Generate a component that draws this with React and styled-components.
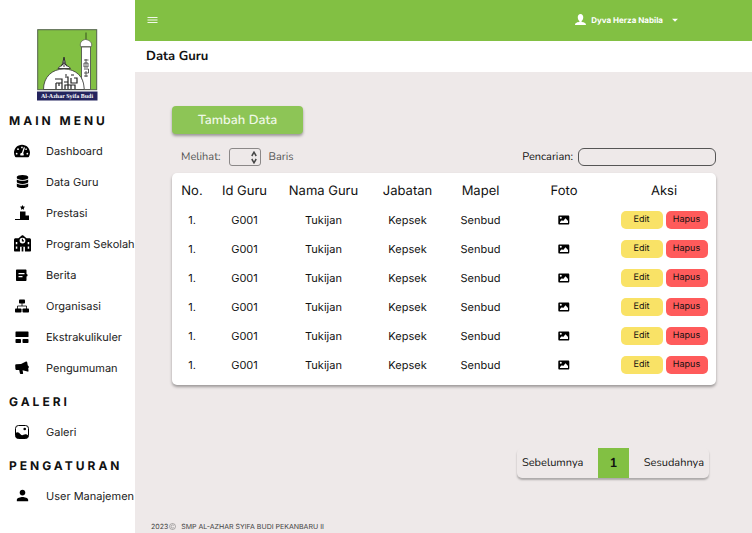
import React from "react";
import styled, { createGlobalStyle } from "styled-components";
import { FaTachometerAlt, FaDatabase } from "react-icons/fa";
import { MdPerson, MdArrowDropDown } from "react-icons/md";

const sans = `Inter, "Liberation Sans", sans-serif`;
const rounded = `Nunito, "Noto Sans", sans-serif`;
const green = "#82c043";

const GlobalStyle = createGlobalStyle`
  *, *::before, *::after { box-sizing: border-box; }
  body { margin: 0; background: #eee9e9; color: #111; font-family: ${sans}; text-rendering: geometricPrecision; }
  button, input, select { font: inherit; color: inherit; margin: 0; text-rendering: inherit; }
  button { border: 0; padding: 0; background: none; cursor: pointer; }
`;

const Shell = styled.div`
  display: flex;
  min-height: 100vh;
`;

const Sidebar = styled.aside`
  flex: 0 0 135px;
  background: #fff;
  padding-top: 29px;
`;

const LogoLink = styled.a`
  display: block;
  width: 61px;
  margin: 0 auto 10px 37px;
  svg { display: block; }
`;

const NavHeading = styled.h2`
  margin: 0;
  padding-left: 9px;
  font-size: 12px;
  line-height: 20px;
  height: 24px;
  font-weight: 700;
  letter-spacing: 3px;
  white-space: nowrap;
`;

const NavList = styled.ul`
  list-style: none;
  margin: 0 0 9px;
  padding: 0;
`;

const NavLink = styled.a`
  display: grid;
  grid-template-columns: 28px 1fr;
  column-gap: 10px;
  align-items: center;
  height: 31px;
  padding-left: 8px;
  font-size: 11px;
  color: #222;
  text-decoration: none;
  white-space: nowrap;
  svg { justify-self: center; color: #000; }
`;

const Main = styled.div`
  flex: 1;
  min-width: 0;
  display: flex;
  flex-direction: column;
`;

const Topbar = styled.header`
  display: flex;
  align-items: center;
  justify-content: space-between;
  height: 41px;
  padding: 0 70px 2px 12px;
  background: ${green};
  color: #fff;
`;

const MenuButton = styled.button`
  display: flex;
`;

const UserButton = styled.button`
  display: flex;
  align-items: center;
  gap: 5px;
  font-size: 8px;
  font-weight: 700;
`;

const TitleBar = styled.div`
  height: 31px;
  padding-left: 11px;
  background: #fff;
`;

const Title = styled.h1`
  margin: 0;
  font: 700 13px/30px ${rounded};
`;

const Content = styled.main`
  flex: 1;
  padding: 34px 36px 0 37px;
`;

const AddButton = styled.button`
  display: block;
  width: 131px;
  height: 28px;
  border-radius: 4px;
  background: #8dc556;
  color: #eff8e6;
  box-shadow: 0 2px 3px rgba(0, 0, 0, 0.35);
  font: 600 13px/26px ${rounded};
`;

const Controls = styled.div`
  display: flex;
  justify-content: space-between;
  align-items: center;
  height: 18px;
  margin: 14px 0 7px;
  font: 400 11px/18px ${rounded};
`;

const RowsControl = styled.div`
  display: flex;
  align-items: center;
  gap: 8px;
  padding-left: 9px;
  color: #555;
`;

const SelectFrame = styled.span`
  display: grid;
  align-items: center;
  width: 32px;
  height: 18px;
  border: 1px solid #8b8888;
  border-radius: 3px;
  select, svg { grid-area: 1 / 1; }
  svg { justify-self: end; margin-right: 3px; pointer-events: none; }
`;

const RowsSelect = styled.select`
  width: 100%;
  height: 16px;
  appearance: none;
  border: 0;
  background: transparent;
`;

const SearchControl = styled.div`
  display: flex;
  align-items: center;
  gap: 5px;
`;

const SearchInput = styled.input`
  width: 138px;
  height: 18px;
  padding: 0 8px;
  border: 1px solid #555;
  border-radius: 6px;
  background: transparent;
`;

const Card = styled.div`
  padding: 3px 0 6px;
  border-radius: 5px;
  background: #fff;
  box-shadow: 0 2px 3px rgba(0, 0, 0, 0.35);
`;

const Table = styled.table`
  width: 100%;
  table-layout: fixed;
  border-collapse: collapse;
  text-align: center;
`;

const HeadCell = styled.th`
  width: ${(p) => p.$width}px;
  height: 29px;
  padding: 0;
  font-size: 13px;
  line-height: 16px;
  font-weight: 400;
`;

const Cell = styled.td`
  height: 29px;
  padding: 0;
  font-size: 11px;
  line-height: 16px;
  svg { display: block; margin: 0 auto; }
`;

const Actions = styled.div`
  display: flex;
  justify-content: center;
  gap: 3px;
`;

const ActionButton = styled.button`
  width: 42px;
  height: 18px;
  border-radius: 5px;
  background: ${(p) => (p.$danger ? "#ff5b5b" : "#f9e266")};
  font-size: 9px;
`;

const Pagination = styled.nav`
  display: grid;
  grid-template-columns: 81px 31px 80px;
  width: max-content;
  height: 30px;
  margin: 63px 7px 0 auto;
  border-radius: 5px;
  box-shadow: 0 2px 2px rgba(0, 0, 0, 0.28);
`;

const PageButton = styled.button`
  padding: 0 5px;
  text-align: ${(p) => p.$align};
  font: 400 11px/30px ${rounded};
`;

const CurrentPage = styled(PageButton)`
  background: ${green};
  font-size: 13px;
  font-weight: 700;
`;

const Footer = styled.footer`
  display: flex;
  align-items: center;
  gap: 5px;
  height: 13px;
  padding-left: 16px;
  font-size: 7px;
  color: #444;
`;

const Year = styled.span`
  display: flex;
  align-items: center;
  gap: 1px;
`;

const Logo = () => (
  <svg width="61" height="72" viewBox="0 0 61 72" role="img" aria-label="Al-Azhar Syifa Budi">
    <rect x=".7" y=".7" width="59" height="60" fill={green} stroke="#52604a" />
    <path d="M6.500 60.500C6.500 48 15 40 27 40s20.500 8 20.500 20.500z" fill="#fff" stroke="#333" strokeWidth=".8" />
    <path d="M21 39.500c1-2.500 4-2 4.500-5l1.500-6 1.500 6c.5 3 4 2.500 5 5z" fill="#fff" stroke="#333" strokeWidth=".9" />
    <path d="M27 28v10M24 37.500l3-4 3 4" fill="none" stroke="#222" strokeWidth=".9" />
    <path d="M44.500 18h9v42.500h-6.200c-.3-5-1.300-9-2.800-11.500z" fill="#fff" stroke="#444" strokeWidth=".8" />
    <path d="M43.500 17.500c-1-4 1.500-6.500 5-7 4 .5 7 3 6 7z" fill="#fff" stroke="#555" strokeWidth=".7" />
    <path d="M49 3.500v7" stroke="#36511f" strokeWidth="1" />
    <path d="M47 31h4.500M49 30v8M47 34h4v4h-4zM47 40h4.500v4H47M49 42v6M47 47h4" fill="none" stroke="#333" strokeWidth=".8" />
    <path d="M18 50h7v4h-6M19 60v-6M25 50v10M22 54v3M28 48h3v5h-4M31 48v12M34 49v5h6v-5h-3M28 60v-4h10v4M34 56v4M28 46h2M34 46h3" fill="none" stroke="#222" strokeWidth="1.200" />
    <rect x="0" y="62.500" width="60.500" height="9" fill="#24245e" />
    <text x="30" y="69" textAnchor="middle" fontFamily="Liberation Serif, serif" fontWeight="700" fontSize="6" fill="#fff">Al-Azhar Syifa Budi</text>
  </svg>
);

const Glyph = ({ size = 16, children }) => (
  <svg width={size} height={size} viewBox="0 0 16 16" fill="currentColor" aria-hidden="true">{children}</svg>
);

const PodiumIcon = () => (
  <Glyph>
    <path d="m8.500 0 .8 1.600 1.800.2-1.300 1.200.3 1.800-1.600-.9-1.600.9.300-1.800L5.900 1.800l1.800-.2zM6 6.500h5.500v4H15V15H6zM1 14h5v1H1z" />
  </Glyph>
);

const SchoolIcon = () => (
  <Glyph size={17}>
    <path fillRule="evenodd" d="M0 4.500C0 3.600.6 3 1.500 3h2.700L7 .6c.6-.5 1.400-.5 2 0L11.800 3h2.700c.9 0 1.500.6 1.500 1.500v10c0 .6-.4 1-1 1h-4.700V11H5.700v4.500H1c-.6 0-1-.4-1-1zM8 2.500a2.700 2.700 0 1 0 0 5.400 2.700 2.700 0 0 0 0-5.400zM1.700 6.500v2.200h1.400V6.500zm0 4.300V13h1.400v-2.200zm11.200-4.300v2.200h1.400V6.500zm0 4.300V13h1.400v-2.200z" />
    <path d="M7.900 3.600v1.900h1.500" fill="none" stroke="currentColor" />
    <path d="M7.200 11h1.600v4.500H7.200z" />
  </Glyph>
);

const NewsIcon = () => (
  <Glyph>
    <path fillRule="evenodd" d="M3 2.500h8.500c.7 0 1 .4 1 1V7l1 .5V9l-1 .5V13c0 .7-.4 1-1 1H3c-.6 0-1-.4-1-1V3.500c0-.6.4-1 1-1zM4.500 6v1.200h6V6zm0 3v1.200h4V9z" />
  </Glyph>
);

const OrgIcon = () => (
  <Glyph>
    <rect x="5" y="1.500" width="6" height="4" rx=".8" />
    <path d="M8 5v3M3.500 11V8h9v3" fill="none" stroke="currentColor" strokeWidth=".8" />
    <rect x="1" y="10.500" width="6.500" height="4" rx=".8" />
    <rect x="8.500" y="10.500" width="6.500" height="4" rx=".8" />
  </Glyph>
);

const BlocksIcon = () => (
  <Glyph>
    <rect x="1.500" y="2.500" width="13" height="5.500" rx=".6" />
    <rect x="1.500" y="10" width="5.500" height="4" rx=".8" />
    <rect x="8.500" y="10" width="6" height="4" rx=".8" />
  </Glyph>
);

const MegaphoneIcon = () => (
  <Glyph>
    <path d="M2.200 4.200 7 4l5-2.400c.6-.3 1 0 1.200.6l.6 3.200c1.200.4 1.400 2.200.4 2.900l.3 2.500c.1.700-.3 1-1 .8L8.600 10.200l.5 3c.1.500-.1.800-.6.800H6.700c-.4 0-.7-.2-.8-.7L5.200 10l-2.400.1C1.900 10 1.500 9.500 1.400 8.700L1.200 5.400c0-.7.3-1.100 1-1.200z" />
  </Glyph>
);

const GalleryIcon = () => (
  <Glyph>
    <rect x="1.500" y="1.500" width="13" height="13" rx="3" fill="none" stroke="currentColor" />
    <path d="M1.500 9c2-1.500 3.500-.6 5 1.200 1 1.200 2 1.200 3 .6 1.700-1 3-.6 5 .8-.2 2-1.300 3-3 3h-7c-1.900 0-3-1.200-3-3z" />
    <circle cx="10.700" cy="5" r="1.300" />
  </Glyph>
);

const AccountIcon = () => (
  <Glyph size={11}>
    <path d="M8 0c2.500 0 4 1.900 4 4.700 0 2.500-1.300 4.900-2.500 5.500v1c2.500.7 6.500 1.300 6.500 4.800H0c0-3.500 4-4.100 6.500-4.800v-1C5.300 9.600 4 7.200 4 4.700 4 1.900 5.500 0 8 0z" />
  </Glyph>
);

const PhotoIcon = () => (
  <svg width="12" height="10" viewBox="0 0 12 10" role="img" aria-label="Foto">
    <path fillRule="evenodd" d="M1.500.5h8.600c.8 0 1.200.4 1.200 1.200v6.600c0 .8-.4 1.200-1.200 1.200H1.500c-.8 0-1.200-.4-1.200-1.200V1.700C.3.900.7.500 1.500.5zm1.300 1.300a1 1 0 1 0 0 2 1 1 0 0 0 0-2zM2 8h8V6L7.500 3.300 5.200 6 3.800 5.200 2 7z" />
  </svg>
);

const StepperIcon = () => (
  <svg width="6" height="13" viewBox="0 0 6 13" fill="none" stroke="#444" strokeWidth="1.500" aria-hidden="true">
    <path d="m.8 5L3 1.200 5.200 5M.8 8 3 11.800 5.200 8" />
  </svg>
);

const sections = [
  {
    title: "MAIN MENU",
    items: [
      ["Dashboard", <FaTachometerAlt size={16} />],
      ["Data Guru", <FaDatabase size={13} />],
      ["Prestasi", <PodiumIcon />],
      ["Program Sekolah", <SchoolIcon />],
      ["Berita", <NewsIcon />],
      ["Organisasi", <OrgIcon />],
      ["Ekstrakulikuler", <BlocksIcon />],
      ["Pengumuman", <MegaphoneIcon />],
    ],
  },
  { title: "GALERI", items: [["Galeri", <GalleryIcon />]] },
  { title: "PENGATURAN", items: [["User Manajemen", <MdPerson size={17} />]] },
];

const columns = [
  ["No.", 40], ["Id Guru", 65], ["Nama Guru", 93], ["Jabatan", 75],
  ["Mapel", 71], ["Foto", 96], ["Aksi", 104],
];

const teachers = Array.from({ length: 6 }, () => ["1.", "G001", "Tukijan", "Kepsek", "Senbud"]);

export default function App() {
  return (
    <>
      <GlobalStyle />
      <Shell>
        <Sidebar>
          <LogoLink href="#"><Logo /></LogoLink>
          <nav>
            {sections.map((section) => (
              <React.Fragment key={section.title}>
                <NavHeading>{section.title}</NavHeading>
                <NavList>
                  {section.items.map(([label, icon]) => (
                    <li key={label}><NavLink href="#">{icon}<span>{label}</span></NavLink></li>
                  ))}
                </NavList>
              </React.Fragment>
            ))}
          </nav>
        </Sidebar>
        <Main>
          <Topbar>
            <MenuButton aria-label="Menu">
              <svg width="11" height="8" viewBox="0 0 11 8" stroke="#f1f8ea" aria-hidden="true">
                <path d="M.5 1.500h10M.5 4h10M.5 6.500h10" />
              </svg>
            </MenuButton>
            <UserButton>
              <AccountIcon />
              <span>Dyva Herza Nabila</span>
              <MdArrowDropDown size={14} />
            </UserButton>
          </Topbar>
          <TitleBar><Title>Data Guru</Title></TitleBar>
          <Content>
            <AddButton>Tambah Data</AddButton>
            <Controls>
              <RowsControl>
                <label htmlFor="rows">Melihat:</label>
                <SelectFrame>
                  <RowsSelect id="rows" defaultValue=""><option value="" /></RowsSelect>
                  <StepperIcon />
                </SelectFrame>
                <span>Baris</span>
              </RowsControl>
              <SearchControl>
                <label htmlFor="search">Pencarian:</label>
                <SearchInput id="search" type="search" />
              </SearchControl>
            </Controls>
            <Card>
              <Table>
                <thead>
                  <tr>{columns.map(([name, width]) => <HeadCell key={name} $width={width}>{name}</HeadCell>)}</tr>
                </thead>
                <tbody>
                  {teachers.map((row, i) => (
                    <tr key={i}>
                      {row.map((value) => <Cell key={value}>{value}</Cell>)}
                      <Cell><PhotoIcon /></Cell>
                      <Cell>
                        <Actions>
                          <ActionButton>Edit</ActionButton>
                          <ActionButton $danger>Hapus</ActionButton>
                        </Actions>
                      </Cell>
                    </tr>
                  ))}
                </tbody>
              </Table>
            </Card>
            <Pagination aria-label="Halaman">
              <PageButton $align="left">Sebelumnya</PageButton>
              <CurrentPage $align="center" aria-current="page">1</CurrentPage>
              <PageButton $align="right">Sesudahnya</PageButton>
            </Pagination>
          </Content>
          <Footer>
            <Year>2023
              <svg width="7" height="7" viewBox="0 0 14 14" fill="none" stroke="#666" aria-hidden="true">
                <circle cx="7" cy="7" r="6" /><path d="M9.500 5A3 3 0 1 0 9.500 9" />
              </svg>
            </Year>
            <span>SMP AL-AZHAR SYIFA BUDI PEKANBARU II</span>
          </Footer>
        </Main>
      </Shell>
    </>
  );
}
